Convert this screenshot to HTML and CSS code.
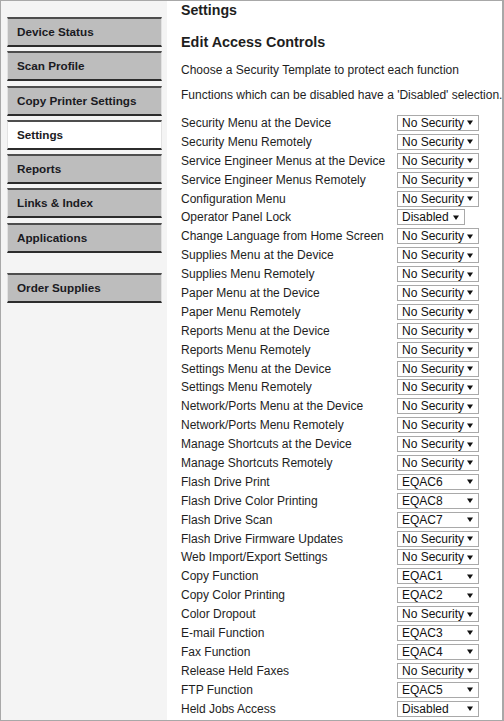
FILE: index.html
```html
<!DOCTYPE html>
<html>
<head>
<meta charset="utf-8">
<link rel="stylesheet" href="styles.css">
</head>
<body>
<div class="frame">
  <nav class="side">
    <div class="nav-item">Device Status</div>
    <div class="nav-item">Scan Profile</div>
    <div class="nav-item">Copy Printer Settings</div>
    <div class="nav-item active">Settings</div>
    <div class="nav-item">Reports</div>
    <div class="nav-item">Links &amp; Index</div>
    <div class="nav-item">Applications</div>
    <div class="nav-item extra">Order Supplies</div>
  </nav>
  <main class="main">
    <h1 class="title">Settings</h1>
    <h2 class="subtitle">Edit Access Controls</h2>
    <p class="intro">Choose a Security Template to protect each function</p>
    <p class="intro second">Functions which can be disabled have a 'Disabled' selection.</p>
    <div class="rows" id="rows"></div>
  </main>
</div>
<script src="app.js"></script>
</body>
</html>
```

FILE: app.js
```js
var data = [
  ["Security Menu at the Device", "No Security"],
  ["Security Menu Remotely", "No Security"],
  ["Service Engineer Menus at the Device", "No Security"],
  ["Service Engineer Menus Remotely", "No Security"],
  ["Configuration Menu", "No Security"],
  ["Operator Panel Lock", "Disabled", "narrow"],
  ["Change Language from Home Screen", "No Security"],
  ["Supplies Menu at the Device", "No Security"],
  ["Supplies Menu Remotely", "No Security"],
  ["Paper Menu at the Device", "No Security"],
  ["Paper Menu Remotely", "No Security"],
  ["Reports Menu at the Device", "No Security"],
  ["Reports Menu Remotely", "No Security"],
  ["Settings Menu at the Device", "No Security"],
  ["Settings Menu Remotely", "No Security"],
  ["Network/Ports Menu at the Device", "No Security"],
  ["Network/Ports Menu Remotely", "No Security"],
  ["Manage Shortcuts at the Device", "No Security"],
  ["Manage Shortcuts Remotely", "No Security"],
  ["Flash Drive Print", "EQAC6"],
  ["Flash Drive Color Printing", "EQAC8"],
  ["Flash Drive Scan", "EQAC7"],
  ["Flash Drive Firmware Updates", "No Security"],
  ["Web Import/Export Settings", "No Security"],
  ["Copy Function", "EQAC1"],
  ["Copy Color Printing", "EQAC2"],
  ["Color Dropout", "No Security"],
  ["E-mail Function", "EQAC3"],
  ["Fax Function", "EQAC4"],
  ["Release Held Faxes", "No Security"],
  ["FTP Function", "EQAC5"],
  ["Held Jobs Access", "Disabled"]
];
var rows = document.getElementById("rows");
data.forEach(function (d) {
  var row = document.createElement("div");
  row.className = "row";
  var label = document.createElement("span");
  label.className = "label";
  label.textContent = d[0];
  var sel = document.createElement("span");
  sel.className = "select" + (d[2] ? " " + d[2] : "");
  var val = document.createElement("span");
  val.className = "value";
  val.textContent = d[1];
  sel.appendChild(val);
  sel.insertAdjacentHTML("beforeend",
    '<svg class="arrow" width="6" height="5" viewBox="0 0 6 5"><polygon points="0,0.5 6,0.5 3,5" fill="#111"/></svg>');
  row.appendChild(label);
  row.appendChild(sel);
  rows.appendChild(row);
});
```

FILE: styles.css
```css
html, body {
  margin: 0;
  padding: 0;
  background: #fff;
}
.frame {
  box-sizing: border-box;
  width: 504px;
  height: 721px;
  border: 1px solid #a8a8a8;
  border-right-width: 2px;
  display: flex;
  overflow: hidden;
  font-family: "Liberation Sans", Arial, sans-serif;
  color: #1e1e1e;
}
.side {
  width: 166px;
  flex: none;
  background: #f4f4f4;
  box-sizing: border-box;
  padding: 16px 5px 0 6px;
  display: flex;
  flex-direction: column;
  gap: 4.3px;
}
.nav-item {
  box-sizing: border-box;
  height: 30px;
  background: #bdbdbd;
  border-top: 2px solid #4d4d4d;
  border-bottom: 2px solid #2c2c2c;
  border-left: 1px solid #e2e2e2;
  border-right: 1px solid #e2e2e2;
  font-weight: bold;
  font-size: 11.7px;
  line-height: 26px;
  padding-left: 9px;
  color: #1a1a22;
  white-space: nowrap;
}
.nav-item.active {
  background: #fff;
}
.nav-item.extra {
  margin-top: 15.7px;
}
.main {
  flex: 1;
  padding-left: 14px;
}
.title {
  margin: 0;
  font-size: 14.2px;
  line-height: 18px;
  font-weight: bold;
}
.subtitle {
  margin: 13px 0 0;
  font-size: 14.4px;
  line-height: 20px;
  font-weight: bold;
}
.intro {
  margin: 10px 0 0;
  font-size: 12px;
  line-height: 16px;
  white-space: nowrap;
}
.intro.second {
  margin-top: 9px;
}
.rows {
  margin-top: 10.5px;
}
.row {
  height: 18.9px;
  display: flex;
  align-items: center;
  font-size: 12px;
}
.label {
  width: 216px;
  flex: none;
  white-space: nowrap;
}
.select {
  box-sizing: border-box;
  width: 82px;
  height: 16px;
  border: 1px solid #a9a9a9;
  background: #fff;
  display: flex;
  align-items: center;
  justify-content: space-between;
  padding: 0 5px 0 4px;
  font-size: 12px;
  line-height: 14px;
  color: #111;
}
.select.narrow {
  width: 68px;
}
.arrow {
  flex: none;
}
```
